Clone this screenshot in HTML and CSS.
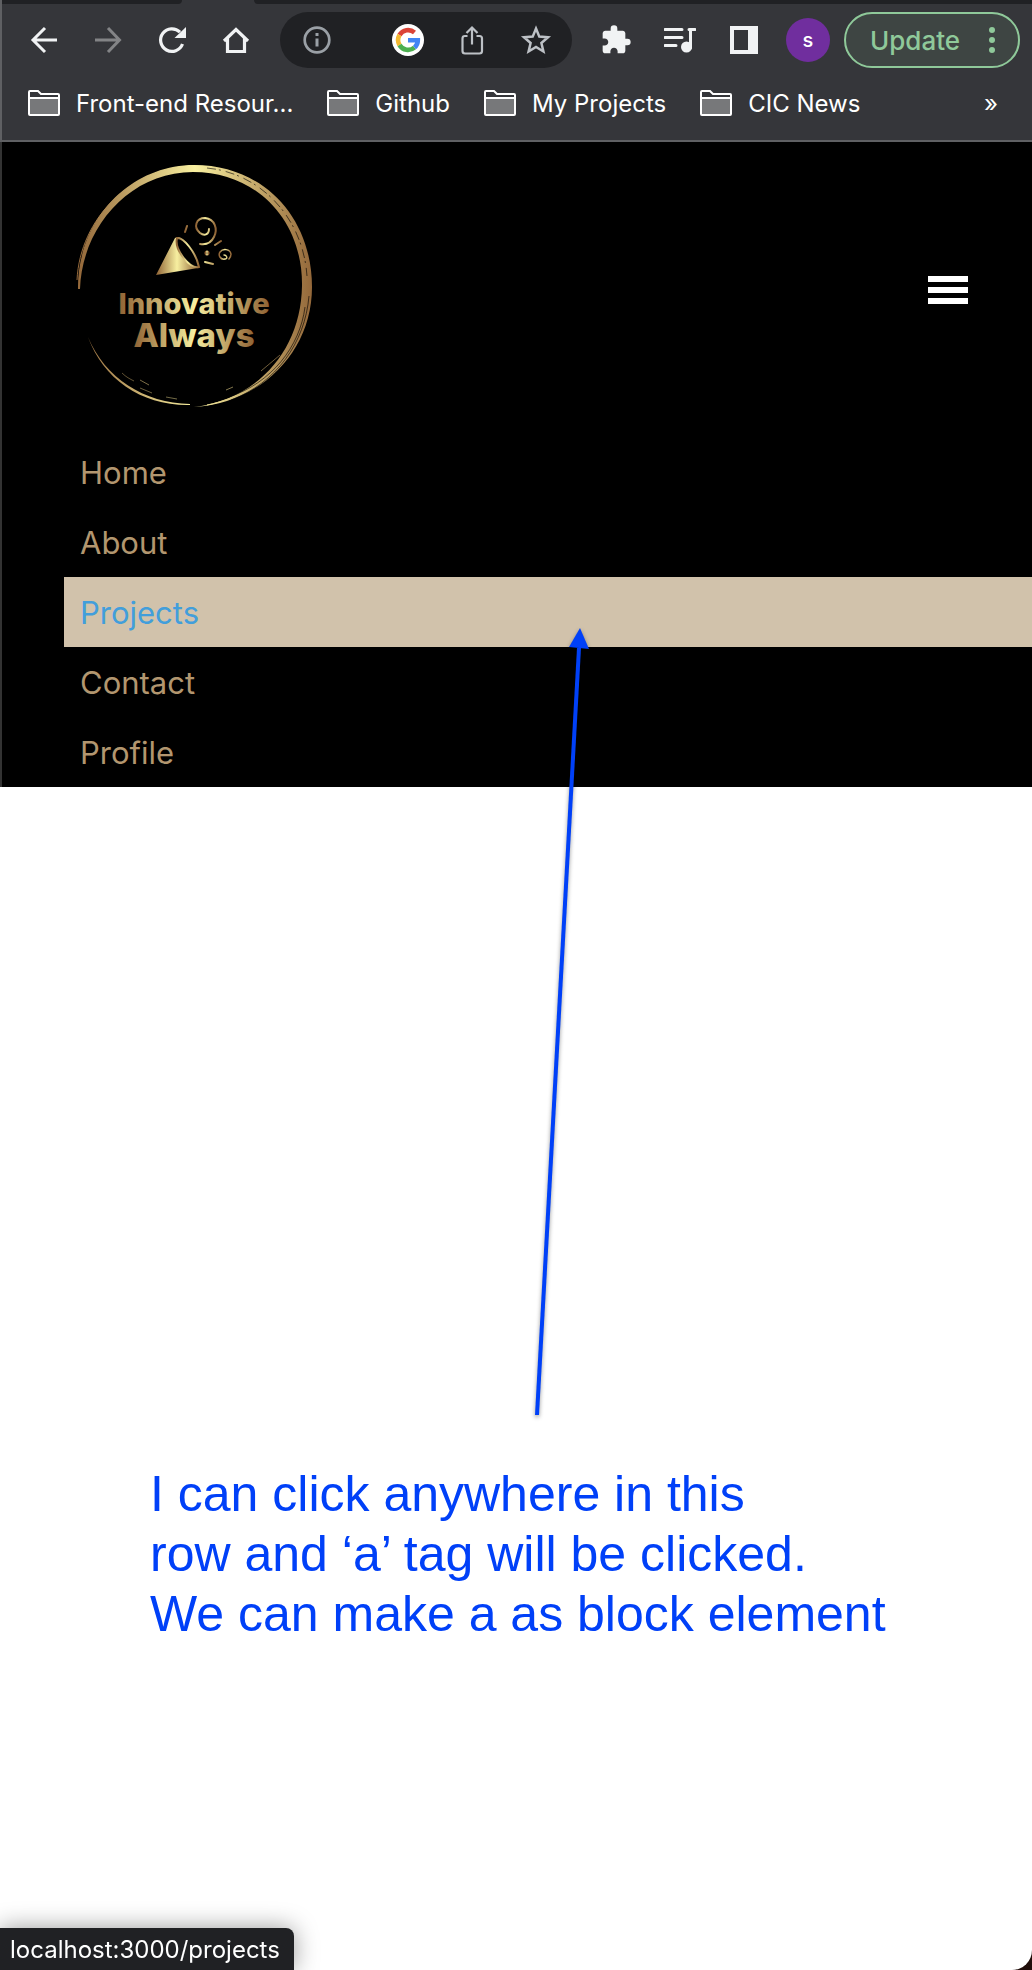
FILE: index.html
```html
<!DOCTYPE html>
<html lang="en">
<head>
<meta charset="utf-8">
<meta name="viewport" content="width=device-width, initial-scale=1">
<title>Innovative Always</title>
<link rel="stylesheet" href="styles.css">
</head>
<body>
<div class="window">
  <div class="chrome">
    <div class="tabstrip"><span class="tabs-before"></span><span class="tabs-after"></span></div>
    <div class="toolbar">
      <button class="tool" aria-label="Back"><svg width="32" height="32" viewBox="0 0 32 32"><path d="M29 16H5M17 4 5 16 17 28" fill="none" stroke="#f1f3f4" stroke-width="3"/></svg></button>
      <button class="tool" aria-label="Forward"><svg width="32" height="32" viewBox="0 0 32 32"><path d="M3 16h24M16 4l11.500 12L16 28" fill="none" stroke="#838486" stroke-width="3"/></svg></button>
      <button class="tool" aria-label="Reload"><svg width="32" height="32" viewBox="0 0 32 32"><path d="M26.500 20A11.300 11.300 0 1 1 24 8.200" fill="none" stroke="#f1f3f4" stroke-width="3.200"/><path d="M30 3v11H18.500z" fill="#f1f3f4"/></svg></button>
      <button class="tool" aria-label="Home"><svg width="32" height="32" viewBox="0 0 32 32"><path d="M4 17 16 5.500 28 17M7.500 14v13.500h17V14" fill="none" stroke="#f1f3f4" stroke-width="3.200"/></svg></button>
      <div class="omnibox">
        <button class="omni-info" aria-label="Site information"><svg width="28" height="28" viewBox="0 0 28 28"><circle cx="14" cy="14" r="12.300" fill="none" stroke="#9aa0a6" stroke-width="2.700"/><path d="M14 7v3M14 12.500v8" stroke="#9aa0a6" stroke-width="3"/></svg></button>
        <button class="omni" aria-label="Google"><svg width="32" height="32" viewBox="0 0 32 32"><circle cx="16" cy="16" r="16" fill="#fff"/><g fill="none" stroke-width="4.600"><path d="M7.500 11A9.900 9.900 0 0 1 22.500 8.500" stroke="#db4437"/><path d="M7.500 21a9.900 9.900 0 0 1 0-10" stroke="#f4b932"/><path d="M22.500 23.500A9.900 9.900 0 0 1 7.500 21" stroke="#4caf50"/><path d="M16 16.200h9.800c0 3-1.300 5.700-3.300 7.300" stroke="#4285f4"/></g></svg></button>
        <button class="omni" aria-label="Share"><svg width="32" height="32" viewBox="0 0 32 32"><path d="M11.500 12H9Q6.500 12 6.500 14.500V27Q6.500 29.500 9 29.500H23.500Q26 29.500 26 27V14.500Q26 12 23.500 12H20.500M16 20.500V4M10.500 9 16 3.500 21.500 9" fill="none" stroke="#bdc1c6" stroke-width="2.200"/></svg></button>
        <button class="omni" aria-label="Bookmark this page"><svg width="32" height="32" viewBox="0 0 32 32"><path d="M16 4.500 19.300 12.600 28 13.300 21.400 19 23.400 27.500 16 23 8.600 27.500 10.600 19 4 13.300 12.700 12.600Z" fill="none" stroke="#bdc1c6" stroke-width="2.500"/></svg></button>
      </div>
      <button class="tool" aria-label="Extensions"><svg width="32" height="32" viewBox="0 0 24 24"><path d="M20.500 11H19V7c0-1.100-.9-2-2-2h-4V3.500a2.500 2.500 0 0 0-5 0V5H4c-1.100 0-2 .9-2 2v3.800h1.500c1.500 0 2.700 1.200 2.700 2.700S5 16.200 3.500 16.200H2V20c0 1.100.9 2 2 2h3.800v-1.500c0-1.500 1.200-2.700 2.700-2.700s2.700 1.200 2.700 2.700V22H17c1.100 0 2-.9 2-2v-4h1.500a2.500 2.500 0 0 0 0-5z" fill="#f1f3f4"/></svg></button>
      <button class="tool" aria-label="Media controls"><svg width="32" height="32" viewBox="0 0 32 32"><path d="M1 5.500h17M1 13.500h17M1 21.500h11M26.500 24V5.500M25 5.500h6" fill="none" stroke="#f1f3f4" stroke-width="3" stroke-linecap="round"/><circle cx="22.500" cy="23" r="5.500" fill="#f1f3f4"/></svg></button>
      <button class="tool" aria-label="Side panel"><svg width="28" height="28" viewBox="0 0 28 28"><path fill-rule="evenodd" d="M0 0h28v28H0zM4 4v20h14V4z" fill="#f1f3f4"/></svg></button>
      <button class="tool" aria-label="Account"><span class="avatar">s</span></button>
      <button class="update">Update<svg width="6" height="26" viewBox="0 0 6 26" aria-hidden="true"><g fill="#8fc99a"><circle cx="3" cy="3" r="3"/><circle cx="3" cy="13" r="3"/><circle cx="3" cy="23" r="3"/></g></svg></button>
    </div>
    <nav class="bookmarks" aria-label="Bookmarks">
      <a href="#front-end"><svg class="folder" viewBox="0 0 32 26"><path d="M1 8h30v16H1z" fill="#77787a"/><path d="M1 2q0-1 1-1h8l3 3h17q1 0 1 1v19q0 1-1 1H2q-1 0-1-1zM1 8h30" fill="none" stroke="#fff" stroke-width="2"/></svg>Front-end Resour...</a>
      <a href="#github"><svg class="folder" viewBox="0 0 32 26"><path d="M1 8h30v16H1z" fill="#77787a"/><path d="M1 2q0-1 1-1h8l3 3h17q1 0 1 1v19q0 1-1 1H2q-1 0-1-1zM1 8h30" fill="none" stroke="#fff" stroke-width="2"/></svg>Github</a>
      <a href="#my-projects"><svg class="folder" viewBox="0 0 32 26"><path d="M1 8h30v16H1z" fill="#77787a"/><path d="M1 2q0-1 1-1h8l3 3h17q1 0 1 1v19q0 1-1 1H2q-1 0-1-1zM1 8h30" fill="none" stroke="#fff" stroke-width="2"/></svg>My Projects</a>
      <a href="#cic-news"><svg class="folder" viewBox="0 0 32 26"><path d="M1 8h30v16H1z" fill="#77787a"/><path d="M1 2q0-1 1-1h8l3 3h17q1 0 1 1v19q0 1-1 1H2q-1 0-1-1zM1 8h30" fill="none" stroke="#fff" stroke-width="2"/></svg>CIC News</a>
      <button class="more" aria-label="More bookmarks">»</button>
    </nav>
  </div>

  <header class="site-header">
    <div class="brand-row">
      <a class="logo" href="#home" aria-label="Innovative Always">
        <svg width="270" height="270" viewBox="0 0 270 270">
          <defs>
            <linearGradient id="ring" gradientUnits="userSpaceOnUse" x1="18" y1="0" x2="252" y2="0"><stop offset="0" stop-color="#94683a"/><stop offset=".5" stop-color="#f9f0a0"/><stop offset="1" stop-color="#94683a"/></linearGradient>
            <linearGradient id="word" x1="0" x2="1" y1="0" y2="0"><stop offset="0" stop-color="#8f6234"/><stop offset=".5" stop-color="#f7efa0"/><stop offset="1" stop-color="#8f6234"/></linearGradient>
          </defs>
          <g fill="url(#ring)">
            <path d="M18 139C17 71 69 15 134 15C205 15 252 69 252 137C252 202 201 253 134 257C199 249 241 199 242 136C243 72 198 22 133 22C70 22 22 77 20 139Z"/>
            <path d="M28 187C45 228 84 253 130 254L130 255C82 256 43 229 28 187Z"/>
          </g>
          <g fill="none" stroke="url(#ring)" stroke-width="1">
            <path d="M17 130C20 68 72 17 133 16C192 16 240 58 248 116"/>
            <path d="M250 130C249 195 205 244 147 255"/>
            <path d="M62 223C66 227 70 229 74 231M80 238L92 243M106 247L117 249" stroke-opacity=".5"/>
            <path d="M166 240L173 237M201 221L220 205M80 230L89 235" stroke-opacity=".6"/>
          </g>
          <g fill="none" stroke="#000" stroke-width="1" stroke-opacity=".6">
            <path d="M147 18C200 23 243 67 247 126" stroke-dasharray="9 3 2 5"/>
            <path d="M249 146C245 193 216 233 171 250M245 157C240 197 211 233 169 247"/>
          </g>
          <g fill="none" stroke="url(#word)" stroke-width="2" stroke-linecap="round">
            <path d="M37 125L56 88Q60 85 67 93Q79 106 79 118Z" transform="translate(59 0)" fill="url(#word)" stroke="none"/>
            <path d="M117 88C123 87 136 102 139 117C130 119 114 100 117 88Z" fill="#000"/>
            <path d="M149 79C149 85 144 86 140 83C133 77 136 68 145 68C155 69 158 79 154 87C151 93 146 95 140 94"/>
            <path d="M164 105C167 105 168 109 165 109C160 110 158 105 160 102C163 98 170 99 171 104C171 106 170 108 169 109" stroke-width="1.500"/>
            <path d="M127 76L125 82M161 91L155 95M145 112L153 114"/>
            <circle cx="147" cy="103" r="1.500"/>
          </g>
          <text class="wordmark first" x="134" y="164" text-anchor="middle" fill="url(#word)">Innovative</text>
          <text class="wordmark second" x="134" y="197" text-anchor="middle" fill="url(#word)">Always</text>
        </svg>
      </a>
      <button class="menu" aria-label="Toggle menu"><span></span><span></span><span></span></button>
    </div>
    <nav class="site-nav" aria-label="Main">
      <a href="#home">Home</a>
      <a href="#about">About</a>
      <a class="active" href="#projects">Projects</a>
      <a href="#contact">Contact</a>
      <a href="#profile">Profile</a>
    </nav>
  </header>

  <main class="content">
    <p class="note">I can click anywhere in this<br>row and ‘a’ tag will be clicked.<br>We can make a as block element</p>
  </main>

  <svg class="arrow" width="60" height="800" viewBox="0 0 60 800" aria-hidden="true"><path d="M49 20L7 787" stroke="#0040f8" stroke-width="4"/><path d="M50 0L59 21L39 19Z" fill="#0040f8"/></svg>
</div>
<div class="status">localhost:3000/projects</div>
</body>
</html>
```
FILE: styles.css
```css
* { box-sizing: border-box; }

html { background: #200e0a; }

body {
  margin: 0;
  font-family: Inter, "Liberation Sans", sans-serif;
}

button {
  margin: 0;
  padding: 0;
  border: 0;
  background: none;
  color: inherit;
  font: inherit;
}

a { color: inherit; text-decoration: none; }

svg { display: block; flex: none; }

.window {
  position: relative;
  min-height: 100vh;
  overflow: hidden;
  background: #fff;
  border-radius: 0 0 20px 20px;
}

/* Browser chrome */
.chrome {
  background: #35363a;
  border-left: 2px solid #5f6063;
  border-bottom: 2px solid #5f6063;
  color: #fff;
}

.tabstrip {
  display: flex;
  justify-content: space-between;
  gap: 72px;
  height: 4px;
}

.tabs-before { width: 180px; background: #202124; border-bottom-right-radius: 8px; }
.tabs-after { flex: 1; background: #202124; border-bottom-left-radius: 8px; }

.toolbar {
  display: flex;
  align-items: center;
  height: 72px;
  padding: 0 12px 0 10px;
}

.tool {
  display: flex;
  align-items: center;
  justify-content: center;
  flex: none;
  width: 64px;
  height: 56px;
}

.omnibox {
  display: flex;
  align-items: center;
  gap: 32px;
  flex: 1;
  height: 56px;
  margin: 0 12px;
  padding: 0 20px 0 23px;
  border-radius: 28px;
  background: #202124;
}

.omni-info { margin-right: auto; }

.avatar {
  width: 44px;
  height: 44px;
  border-radius: 50%;
  background: #702e9e;
  font-size: 20px;
  font-weight: 500;
  line-height: 44px;
  text-align: center;
}

.update {
  display: flex;
  align-items: center;
  justify-content: space-between;
  flex: none;
  width: 176px;
  height: 56px;
  margin-left: 4px;
  padding: 0 23px 0 24px;
  border: 2px solid #8fc99a;
  border-radius: 28px;
  background: #3e4543;
  color: #8fc99a;
  font-size: 26px;
  font-weight: 500;
}

.bookmarks {
  display: flex;
  align-items: center;
  gap: 34px;
  height: 64px;
  padding: 0 34px 10px 26px;
  font-size: 24px;
  white-space: nowrap;
}

.bookmarks a { display: flex; align-items: center; gap: 16px; }
.folder { width: 32px; height: 26px; }
.more { margin-left: auto; }

/* Site header */
.site-header {
  border-left: 2px solid #333;
  background: #000;
}

.brand-row {
  display: flex;
  align-items: center;
  justify-content: space-between;
  min-height: 295px;
  padding: 0 64px 0 58px;
}

.logo { align-self: flex-start; padding-top: 8px; }

.menu {
  display: flex;
  flex-direction: column;
  gap: 5px;
  width: 40px;
}

.menu span { height: 6px; background: #fff; }

.wordmark { font-weight: 800; }
.first { font-size: 29px; }
.second { font-size: 33px; }

.site-nav { padding-left: 62px; }

.site-nav a {
  display: block;
  padding: 2px 16px 0;
  color: #b2966f;
  font-size: 31px;
  line-height: 68px;
}

.site-nav .active { background: #d1c2ab; color: #429edb; }

/* Annotation */
.content { padding: 677px 64px 120px 150px; }

.note {
  margin: 0;
  color: #0040f8;
  font-family: "Liberation Sans", Arial, sans-serif;
  font-size: 50px;
  line-height: 60px;
}

.arrow {
  position: absolute;
  top: 628px;
  left: 530px;
  filter: drop-shadow(0 2px 2px rgba(0, 0, 0, 0.4));
}

.status {
  position: fixed;
  bottom: 0;
  left: 0;
  padding: 2px 14px 0 10px;
  border-top-right-radius: 8px;
  background: #202124;
  box-shadow: 0 0 24px rgba(0, 0, 0, 0.4);
  color: #fff;
  font-size: 24px;
  line-height: 40px;
}
```
